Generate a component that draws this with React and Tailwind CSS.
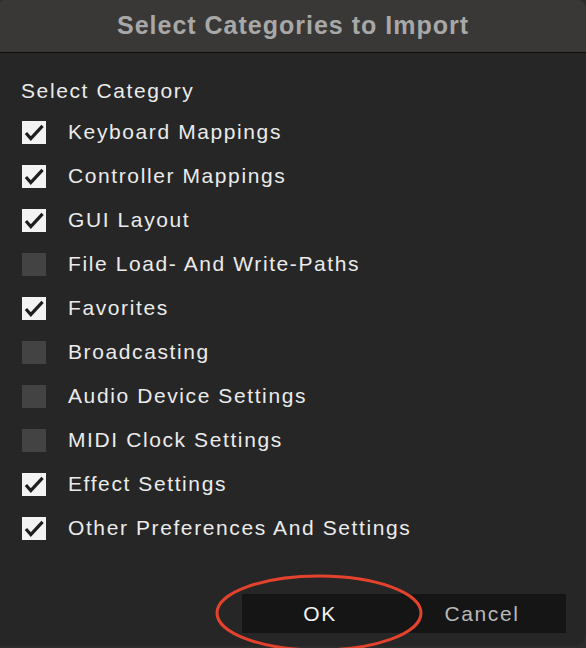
import React from "react";

const categories = [
  { label: "Keyboard Mappings", checked: true },
  { label: "Controller Mappings", checked: true },
  { label: "GUI Layout", checked: true },
  { label: "File Load- And Write-Paths", checked: false },
  { label: "Favorites", checked: true },
  { label: "Broadcasting", checked: false },
  { label: "Audio Device Settings", checked: false },
  { label: "MIDI Clock Settings", checked: false },
  { label: "Effect Settings", checked: true },
  { label: "Other Preferences And Settings", checked: true },
];

const CheckBox = ({ checked }) => {
  if (!checked) {
    return <div className="w-[24px] h-[23px] bg-[#434343] shrink-0" />;
  }
  return (
    <div className="w-[24px] h-[23px] bg-[#f3f3f3] shrink-0 flex items-center justify-center">
      <svg width="24" height="23" viewBox="0 0 24 23">
        <path
          d="M5 13.2 L8.8 17.6 L19.5 6"
          fill="none"
          stroke="#1e1e1e"
          strokeWidth="3.2"
          strokeLinecap="square"
          strokeLinejoin="miter"
        />
      </svg>
    </div>
  );
};

const App = () => {
  return (
    <div className="relative w-[586px] h-[648px] bg-[#2c2c2c] overflow-hidden font-['Liberation_Sans',Arial,sans-serif]">
      <div className="h-[646px] flex flex-col rounded-tl-[4px] rounded-tr-[8px] rounded-br-[12px] overflow-hidden bg-[#262626]">

        {/* title bar */}
        <div className="h-[53px] shrink-0 bg-[#393836] border-b border-[#0c0c0c] flex items-center justify-center">
          <h1 className="text-[25px] leading-none font-bold tracking-[1px] text-[#a8a8a8] pb-[2px]">
            Select Categories to Import
          </h1>
        </div>

        {/* body */}
        <div className="flex-1 flex flex-col">
          <p className="mt-[26px] ml-[21px] text-[21px] leading-[24px] tracking-[1.6px] text-[#ebebeb]">
            Select Category
          </p>

          <ul className="mt-[7px]">
            {categories.map((c) => (
              <li key={c.label} className="h-[44px] flex items-center pl-[22px] gap-[22px]">
                <CheckBox checked={c.checked} />
                <span className="text-[21px] leading-[24px] tracking-[1.6px] text-[#ebebeb]">
                  {c.label}
                </span>
              </li>
            ))}
          </ul>

          {/* buttons */}
          <div className="mt-[44px] flex justify-end pr-[20px]">
            <button className="w-[156px] h-[39px] bg-[#151515] text-[21px] tracking-[1.6px] text-[#f2f2f2]">
              OK
            </button>
            <button className="w-[168px] h-[39px] bg-[#151515] text-[21px] tracking-[1.6px] text-[#b8b8b8]">
              Cancel
            </button>
          </div>
        </div>
      </div>

      {/* red annotation ring */}
      <svg className="absolute left-[214px] top-[572px]" width="210" height="80" viewBox="0 0 210 80">
        <ellipse cx="105" cy="41" rx="102" ry="37" fill="none" stroke="#e3432c" strokeWidth="3" />
      </svg>
    </div>
  );
};

export default App;
